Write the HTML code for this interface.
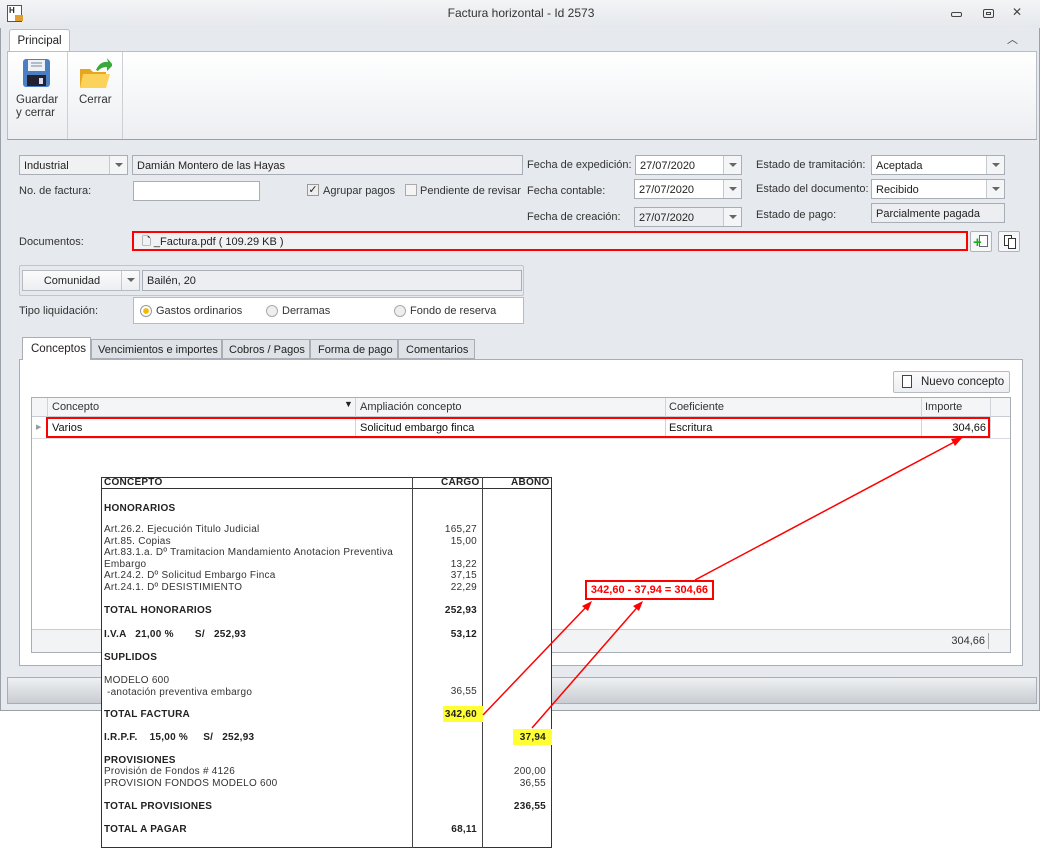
<!DOCTYPE html>
<html><head><meta charset="utf-8"><style>
*{box-sizing:border-box;margin:0;padding:0}
body{width:1042px;height:849px;background:#fff;font-family:"Liberation Sans",sans-serif;font-size:12px;color:#222;position:relative;overflow:hidden}
.a{position:absolute}
.lbl{position:absolute;font-size:11px;color:#333;white-space:nowrap}
.fld{position:absolute;background:#fff;border:1px solid #a9adb5;font-size:11px;padding:3px 4px 0;white-space:nowrap;line-height:14px}
.gray{background:#eceef1}
.dd{position:absolute;top:0;right:0;width:18px;height:100%;border-left:1px solid #c5c8ce;background:#f4f5f7}
.dd:after{content:"";position:absolute;left:5px;top:7px;border:4px solid transparent;border-top:4px solid #666}
.inv{position:absolute;font-family:"Liberation Sans",sans-serif;font-size:10px;letter-spacing:0.25px;color:#333;white-space:nowrap;line-height:11.5px}
.b{font-weight:bold;color:#222}
.r{text-align:right}
</style></head><body>
<div class="a" style="left:0;top:0;width:1040px;height:711px;background:#e6e9ed;border:1px solid #9aa0a8;border-radius:4px 4px 0 0"></div>
<div class="a" style="left:0;top:0;width:1040px;height:28px;background:linear-gradient(#f3f4f6,#e5e8ec)"></div>
<div class="a" style="left:7px;top:5px;width:15px;height:17px;border:1px solid #555;background:#fff;font-size:8px;font-weight:bold;line-height:9px;padding-left:1px">H</div>
<div class="a" style="left:15px;top:15px;width:8px;height:6px;background:#e0a030"></div>
<div class="a" style="left:0;top:6px;width:1042px;text-align:center;font-size:12px;color:#333">Factura horizontal - Id 2573</div>
<div class="a" style="left:951px;top:12px;width:11px;height:5px;border:1px solid #444;border-radius:2px"></div>
<div class="a" style="left:983px;top:9px;width:11px;height:9px;border:1px solid #444;border-radius:2px"></div>
<div class="a" style="left:986px;top:12px;width:5px;height:3px;border:1px solid #444"></div>
<div class="a" style="left:1012px;top:5px;font-size:12px;color:#444">✕</div>
<div class="a" style="left:1007px;top:31px;font-size:11px;color:#444">︿</div>
<div class="a" style="left:9px;top:29px;width:61px;height:23px;background:#fff;border:1px solid #b9bec6;border-bottom:none;border-radius:3px 3px 0 0;text-align:center;font-size:11.5px;padding-top:5px">Principal</div>
<div class="a" style="left:7px;top:51px;width:1030px;height:89px;background:linear-gradient(#fff,#f4f5f7 60%,#eceef1);border:1px solid #b9bec6;border-bottom:1px solid #9aa0a8"></div>
<div class="a" style="left:67px;top:52px;width:1px;height:87px;background:#ccd0d6"></div>
<div class="a" style="left:122px;top:52px;width:1px;height:87px;background:#ccd0d6"></div>
<svg class="a" style="left:22px;top:58px" width="29" height="30"><rect x="1" y="1" width="27" height="28" rx="3" fill="#4a7fc4"/><rect x="6" y="2" width="17" height="11" fill="#eef2f7"/><line x1="9" y1="5" x2="20" y2="5" stroke="#789"/><line x1="9" y1="8" x2="20" y2="8" stroke="#789"/><rect x="5" y="17" width="19" height="11" fill="#223"/><rect x="17" y="20" width="4" height="6" fill="#dde"/></svg>
<svg class="a" style="left:78px;top:56px" width="34" height="34"><path d="M2 13 h10 l3 3 h13 v16 h-26z" fill="#e8a520"/><path d="M5 18 h27 l-4 14 h-26z" fill="#fcd35a"/><path d="M18 14 q4-9 12-8 l-1-4 6 7-6 6 v-4 q-6 0-9 4z" fill="#3aa83a"/></svg>
<div class="a" style="left:16px;top:94px;font-size:11.5px;line-height:13px;color:#333">Guardar<br>y cerrar</div>
<div class="a" style="left:79px;top:94px;font-size:11.5px;color:#333">Cerrar</div>
<div class="fld gray" style="left:19px;top:155px;width:109px;height:20px;background:#f0f1f3">Industrial<div class="dd"></div></div>
<div class="fld gray" style="left:132px;top:155px;width:391px;height:20px">Damián Montero de las Hayas</div>
<div class="lbl" style="left:19px;top:185px">No. de factura:</div>
<div class="fld" style="left:133px;top:181px;width:127px;height:20px"></div>
<div class="a" style="left:307px;top:184px;width:12px;height:12px;border:1px solid #999;background:#eee;font-size:11px;line-height:10px;text-align:center">✓</div>
<div class="lbl" style="left:323px;top:185px">Agrupar pagos</div>
<div class="a" style="left:405px;top:184px;width:12px;height:12px;border:1px solid #aaa;background:#f4f4f4"></div>
<div class="lbl" style="left:420px;top:185px">Pendiente de revisar</div>
<div class="lbl" style="left:527px;top:159px">Fecha de expedición:</div>
<div class="lbl" style="left:527px;top:185px">Fecha contable:</div>
<div class="lbl" style="left:527px;top:211px">Fecha de creación:</div>
<div class="fld" style="left:635px;top:155px;width:107px;height:20px">27/07/2020<div class="dd"></div></div>
<div class="fld" style="left:634px;top:179px;width:108px;height:20px">27/07/2020<div class="dd"></div></div>
<div class="fld gray" style="left:634px;top:207px;width:108px;height:20px">27/07/2020<div class="dd"></div></div>
<div class="lbl" style="left:756px;top:159px">Estado de tramitación:</div>
<div class="lbl" style="left:756px;top:183px">Estado del documento:</div>
<div class="lbl" style="left:756px;top:209px">Estado de pago:</div>
<div class="fld" style="left:871px;top:155px;width:134px;height:20px">Aceptada<div class="dd"></div></div>
<div class="fld" style="left:871px;top:179px;width:134px;height:20px">Recibido<div class="dd"></div></div>
<div class="fld gray" style="left:871px;top:203px;width:134px;height:20px">Parcialmente pagada</div>
<div class="lbl" style="left:19px;top:236px">Documentos:</div>
<div class="fld gray" style="left:132px;top:231px;width:836px;height:20px;border:2px solid #f00;padding:2px 8px;background:#f0f1f3">🗋 _Factura.pdf ( 109.29 KB )</div>
<div class="a" style="left:970px;top:231px;width:22px;height:21px;border:1px solid #b0b4ba;border-radius:2px;background:#f6f7f8"><div class="a" style="left:8px;top:3px;width:9px;height:12px;border:1px solid #666;background:#fff"></div><div class="a" style="left:2px;top:5px;color:#2a2;font-weight:bold;font-size:15px;line-height:12px">+</div></div>
<div class="a" style="left:998px;top:231px;width:22px;height:21px;border:1px solid #b0b4ba;border-radius:2px;background:#f6f7f8"><div class="a" style="left:5px;top:3px;width:8px;height:11px;border:1px solid #333;background:#fff"></div><div class="a" style="left:9px;top:6px;width:8px;height:11px;border:1px solid #333;background:#fff"></div></div>
<div class="a" style="left:19px;top:265px;width:505px;height:31px;border:1px solid #c2c6cc;border-radius:2px"></div>
<div class="a" style="left:22px;top:270px;width:118px;height:21px;border:1px solid #b6bac1;background:linear-gradient(#fbfbfc,#eceef1);font-size:11px;text-align:center;padding:4px 18px 0 0">Comunidad<div class="dd" style="background:transparent"></div></div>
<div class="fld gray" style="left:142px;top:270px;width:380px;height:21px">Bailén, 20</div>
<div class="lbl" style="left:19px;top:305px">Tipo liquidación:</div>
<div class="a" style="left:133px;top:297px;width:391px;height:27px;background:#fff;border:1px solid #b6bac1"></div>
<div class="a" style="left:140px;top:305px;width:12px;height:12px;border-radius:50%;border:1px solid #999;background:radial-gradient(#f5b800 35%,#fff 45%)"></div>
<div class="lbl" style="left:156px;top:305px">Gastos ordinarios</div>
<div class="a" style="left:266px;top:305px;width:12px;height:12px;border-radius:50%;border:1px solid #aaa;background:#eee"></div>
<div class="lbl" style="left:282px;top:305px">Derramas</div>
<div class="a" style="left:394px;top:305px;width:12px;height:12px;border-radius:50%;border:1px solid #aaa;background:#eee"></div>
<div class="lbl" style="left:410px;top:305px">Fondo de reserva</div>
<div class="a" style="left:19px;top:359px;width:1004px;height:307px;background:#fff;border:1px solid #a9adb5"></div>
<div class="a" style="left:22px;top:337px;width:69px;height:23px;background:#fff;border:1px solid #a9adb5;border-bottom:none;font-size:11.5px;padding:5px 0 0 8px">Conceptos</div>
<div class="a" style="left:91px;top:339px;width:131px;height:20px;background:#dfe2e7;border:1px solid #a9adb5;font-size:11px;padding:4px 0 0 6px">Vencimientos e importes</div>
<div class="a" style="left:222px;top:339px;width:88px;height:20px;background:#dfe2e7;border:1px solid #a9adb5;font-size:11px;padding:4px 0 0 6px">Cobros / Pagos</div>
<div class="a" style="left:310px;top:339px;width:88px;height:20px;background:#dfe2e7;border:1px solid #a9adb5;font-size:11px;padding:4px 0 0 7px">Forma de pago</div>
<div class="a" style="left:398px;top:339px;width:77px;height:20px;background:#dfe2e7;border:1px solid #a9adb5;font-size:11px;padding:4px 0 0 7px">Comentarios</div>
<div class="a" style="left:893px;top:371px;width:117px;height:22px;border:1px solid #b6bac1;border-radius:2px;background:linear-gradient(#fbfbfc,#eceef1);font-size:11.5px;padding:4px 0 0 27px">Nuevo concepto<div class="a" style="left:8px;top:3px;width:10px;height:13px;border:1px solid #444;background:#fff"></div></div>
<div class="a" style="left:31px;top:397px;width:980px;height:256px;border:1px solid #a9adb5;background:#fff"></div>
<div class="a" style="left:32px;top:398px;width:978px;height:19px;background:#f4f5f7;border-bottom:1px solid #c9ccd2"></div>
<div class="a" style="left:47px;top:398px;width:1px;height:40px;background:#d0d3d8"></div>
<div class="a" style="left:355px;top:398px;width:1px;height:40px;background:#d0d3d8"></div>
<div class="a" style="left:665px;top:398px;width:1px;height:40px;background:#d0d3d8"></div>
<div class="a" style="left:921px;top:398px;width:1px;height:40px;background:#d0d3d8"></div>
<div class="a" style="left:990px;top:398px;width:1px;height:40px;background:#d0d3d8"></div>
<div class="a" style="left:32px;top:438px;width:978px;height:1px;background:#d8dadf"></div>
<div class="lbl" style="left:52px;top:401px">Concepto</div>
<div class="a" style="left:344px;top:399px;font-size:9px">▼</div>
<div class="lbl" style="left:360px;top:401px">Ampliación concepto</div>
<div class="lbl" style="left:669px;top:401px">Coeficiente</div>
<div class="lbl" style="left:925px;top:401px">Importe</div>
<div class="a" style="left:36px;top:423px;font-size:7px;color:#999">▶</div>
<div class="a" style="left:46px;top:417px;width:944px;height:21px;border:2px solid #f00"></div>
<div class="lbl" style="left:52px;top:422px;color:#111">Varios</div>
<div class="lbl" style="left:360px;top:422px;color:#111">Solicitud embargo finca</div>
<div class="lbl" style="left:669px;top:422px;color:#111">Escritura</div>
<div class="lbl" style="left:925px;top:422px;width:61px;text-align:right;color:#111">304,66</div>
<div class="a" style="left:32px;top:629px;width:978px;height:23px;background:#f2f3f5;border-top:1px solid #c9ccd2"></div>
<div class="lbl" style="left:940px;top:635px;width:45px;text-align:right">304,66</div>
<div class="a" style="left:988px;top:633px;width:1px;height:16px;background:#aaa"></div>
<div class="a" style="left:7px;top:677px;width:1030px;height:27px;background:linear-gradient(#eef0f2,#c9ccd1);border:1px solid #a9adb5"></div>
<div class="a" style="left:101px;top:477px;width:451px;height:371px;background:#fff;border:1px solid #333"></div>
<div class="a" style="left:101px;top:488px;width:451px;height:1px;background:#333"></div>
<div class="a" style="left:412px;top:477px;width:1px;height:371px;background:#444"></div>
<div class="a" style="left:482px;top:477px;width:1px;height:371px;background:#444"></div>
<div class="inv b" style="left:104px;top:477px">CONCEPTO</div>
<div class="inv b" style="left:441px;top:477px">CARGO</div>
<div class="inv b" style="left:511px;top:477px">ABONO</div>
<div class="inv b" style="left:104px;top:503px">HONORARIOS</div>
<div class="inv" style="left:104px;top:524px">Art.26.2. Ejecución Titulo Judicial<br>Art.85. Copias<br>Art.83.1.a. Dº Tramitacion Mandamiento Anotacion Preventiva<br>Embargo<br>Art.24.2. Dº Solicitud Embargo Finca<br>Art.24.1. Dº DESISTIMIENTO</div>
<div class="inv r" style="left:420px;top:524px;width:57px">165,27<br>15,00<br>&nbsp;<br>13,22<br>37,15<br>22,29</div>
<div class="inv b" style="left:104px;top:605px">TOTAL HONORARIOS</div>
<div class="inv b r" style="left:420px;top:605px;width:57px">252,93</div>
<div class="inv b" style="left:104px;top:629px">I.V.A &nbsp;&nbsp;21,00 % &nbsp;&nbsp;&nbsp;&nbsp;&nbsp;&nbsp;S/ &nbsp;&nbsp;252,93</div>
<div class="inv b r" style="left:420px;top:629px;width:57px">53,12</div>
<div class="inv b" style="left:104px;top:652px">SUPLIDOS</div>
<div class="inv" style="left:104px;top:675px">MODELO 600<br>&nbsp;-anotación preventiva embargo</div>
<div class="inv r" style="left:420px;top:686px;width:57px">36,55</div>
<div class="inv b" style="left:104px;top:709px">TOTAL FACTURA</div>
<div class="a" style="left:443px;top:706px;width:40px;height:16px;background:#ffff33"></div>
<div class="inv b r" style="left:420px;top:709px;width:57px">342,60</div>
<div class="inv b" style="left:104px;top:732px">I.R.P.F. &nbsp;&nbsp;&nbsp;15,00 % &nbsp;&nbsp;&nbsp;&nbsp;S/ &nbsp;&nbsp;252,93</div>
<div class="a" style="left:513px;top:729px;width:39px;height:16px;background:#ffff33"></div>
<div class="inv b r" style="left:490px;top:732px;width:56px">37,94</div>
<div class="inv b" style="left:104px;top:755px">PROVISIONES</div>
<div class="inv" style="left:104px;top:766px">Provisión de Fondos # 4126<br>PROVISION FONDOS MODELO 600</div>
<div class="inv r" style="left:490px;top:766px;width:56px">200,00<br>36,55</div>
<div class="inv b" style="left:104px;top:801px">TOTAL PROVISIONES</div>
<div class="inv b r" style="left:490px;top:801px;width:56px">236,55</div>
<div class="inv b" style="left:104px;top:824px">TOTAL A PAGAR</div>
<div class="inv b r" style="left:420px;top:824px;width:57px">68,11</div>
<div class="a" style="left:585px;top:580px;width:129px;height:20px;border:2px solid #f00;background:#fff;color:#f00;font-weight:bold;font-size:11px;text-align:center;padding-top:2px">342,60 - 37,94 = 304,66</div>
<svg class="a" style="left:0;top:0" width="1042" height="849">
<g stroke="#f00" stroke-width="1.5" fill="#f00">
<line x1="483" y1="715" x2="590" y2="603"/><polygon points="592,601 582,606 588,611" stroke="none"/>
<line x1="532" y1="728" x2="641" y2="603"/><polygon points="643,601 633,606 639,611" stroke="none"/>
<line x1="695" y1="580" x2="960" y2="439"/><polygon points="963,437 951,439 955,446" stroke="none"/>
</g></svg>
</body></html>
